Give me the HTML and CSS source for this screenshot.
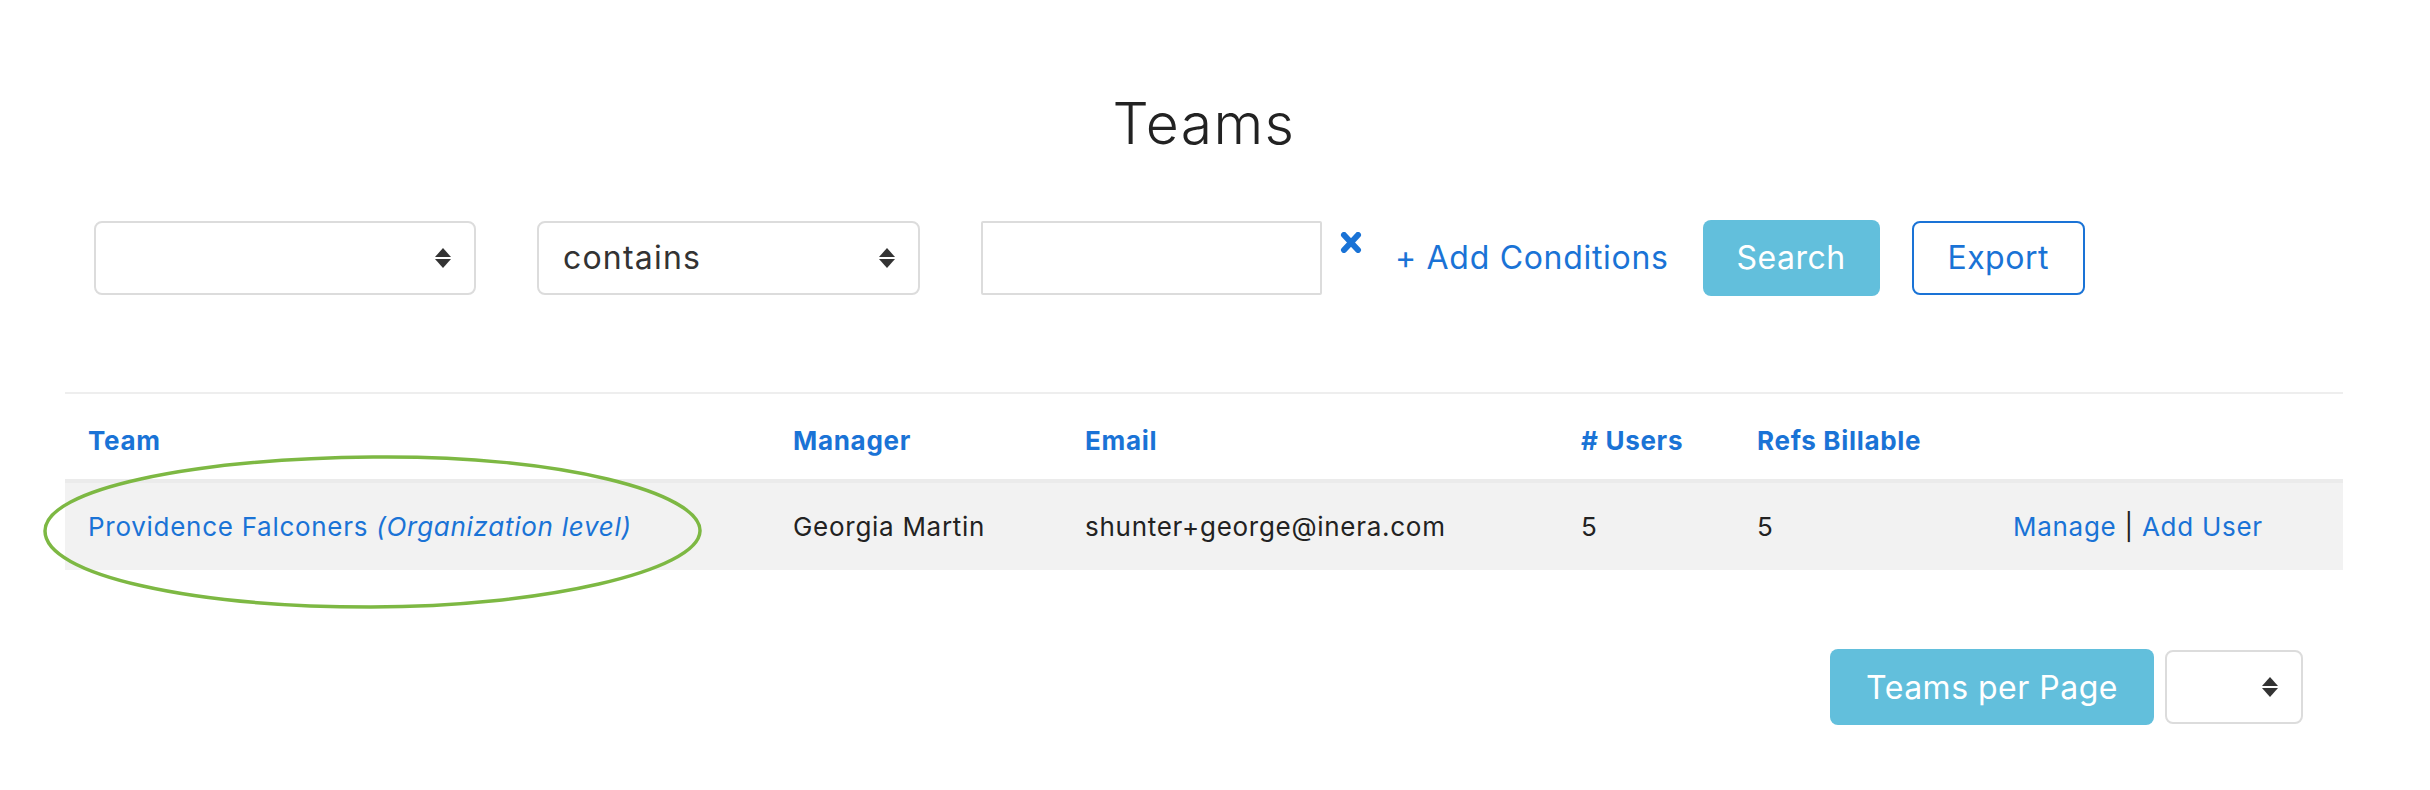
FILE: index.html
```html
<!DOCTYPE html>
<html lang="en">
<head>
<meta charset="utf-8">
<title>Teams</title>
<link rel="stylesheet" href="styles.css">
</head>
<body>
<div class="page">
  <h1 class="title">Teams</h1>

  <div class="filters">
    <div class="select select-field">
      <span class="select-value"></span>
      <span class="updown"><i class="up"></i><i class="down"></i></span>
    </div>
    <div class="select select-op">
      <span class="select-value">contains</span>
      <span class="updown"><i class="up"></i><i class="down"></i></span>
    </div>
    <div class="text-input"></div>
    <svg class="clear" viewBox="0 0 22 21" width="22" height="21" aria-hidden="true">
      <path d="M4 3 L18 18 M18 3 L4 18" stroke="#1a73d6" stroke-width="6" stroke-linecap="round" fill="none"/>
    </svg>
    <a class="add-link" href="#">+ Add Conditions</a>
    <button class="btn btn-search">Search</button>
    <button class="btn btn-export">Export</button>
  </div>

  <div class="table-wrap">
    <table class="teams">
      <colgroup>
        <col class="c-team"><col class="c-manager"><col class="c-email"><col class="c-users"><col class="c-refs"><col class="c-actions">
      </colgroup>
      <thead>
        <tr>
          <th>Team</th>
          <th>Manager</th>
          <th>Email</th>
          <th># Users</th>
          <th>Refs Billable</th>
          <th></th>
        </tr>
      </thead>
      <tbody>
        <tr>
          <td><a href="#" class="link">Providence Falconers <em>(Organization level)</em></a></td>
          <td>Georgia Martin</td>
          <td>shunter+george@inera.com</td>
          <td>5</td>
          <td>5</td>
          <td><a href="#" class="link">Manage</a> | <a href="#" class="link">Add User</a></td>
        </tr>
      </tbody>
    </table>
    <svg class="annotation" viewBox="0 0 664 158" width="664" height="158" aria-hidden="true">
      <path d="M332 4 C 520 2, 660 40, 659 78 C 658 118, 500 154, 330 154 C 150 154, 4 122, 4 78 C 4 36, 150 6, 332 4 Z" fill="none" stroke="#7db843" stroke-width="3.5"/>
    </svg>
  </div>

  <div class="pager">
    <button class="btn btn-per-page">Teams per Page</button>
    <div class="select select-per-page">
      <span class="select-value"></span>
      <span class="updown"><i class="up"></i><i class="down"></i></span>
    </div>
  </div>
</div>
</body>
</html>
```

FILE: styles.css
```css
* { box-sizing: border-box; }

html, body {
  margin: 0;
  padding: 0;
  background: #ffffff;
}

body {
  font-family: Inter, "Noto Sans", "Liberation Sans", sans-serif;
  color: #222222;
}

.page {
  width: 2278px;
  margin-left: 65px;
  padding-top: 86px;
}

.title {
  margin: 0;
  text-align: center;
  font-weight: 300;
  font-size: 57px;
  line-height: 76px;
  letter-spacing: 1.4px;
  color: #222222;
}

/* ---------- filter bar ---------- */
.filters {
  display: flex;
  align-items: center;
  margin-top: 58px;
  padding-left: 29px;
  height: 75px;
}

.select {
  height: 74px;
  border: 2px solid #dcdcdc;
  border-radius: 8px;
  display: flex;
  align-items: center;
  justify-content: space-between;
  padding: 0 23px 0 24px;
  background: #fff;
}

.select-value {
  font-size: 32px;
  letter-spacing: 1.2px;
  color: #333333;
}

.select-field { width: 382px; }
.select-op { width: 383px; margin-left: 61px; }

.updown {
  display: flex;
  flex-direction: column;
  align-items: center;
  gap: 2px;
}

.updown i {
  display: block;
  width: 0;
  height: 0;
  border-left: 8px solid transparent;
  border-right: 8px solid transparent;
}
.updown .up { border-bottom: 9px solid #333; }
.updown .down { border-top: 9px solid #333; }

.text-input {
  width: 341px;
  height: 74px;
  margin-left: 61px;
  border: 2px solid #dcdcdc;
  border-radius: 2px;
  background: #fff;
}

.clear {
  align-self: flex-start;
  margin-top: 12px;
  margin-left: 18px;
}

.add-link {
  margin-left: 33px;
  font-size: 32px;
  letter-spacing: 0.7px;
  color: #1a73d6;
  text-decoration: none;
}

.btn {
  font-family: inherit;
  border-radius: 8px;
  cursor: pointer;
  font-size: 32px;
  letter-spacing: 0.5px;
  padding: 0;
}

.btn-search {
  margin-left: 34px;
  width: 177px;
  height: 76px;
  background: #62bfdc;
  border: none;
  color: #ffffff;
}

.btn-export {
  margin-left: 32px;
  width: 173px;
  height: 74px;
  background: #fff;
  border: 2px solid #1a73d6;
  color: #1a73d6;
}

/* ---------- table ---------- */
.table-wrap {
  position: relative;
  margin-top: 97px;
}

.teams {
  width: 100%;
  border-collapse: collapse;
  table-layout: fixed;
  border-top: 2px solid #eeeeee;
}

.c-team { width: 705px; }
.c-manager { width: 292px; }
.c-email { width: 496px; }
.c-users { width: 176px; }
.c-refs { width: 256px; }
.c-actions { width: 353px; }

.teams th {
  text-align: left;
  font-weight: 700;
  font-size: 26px;
  color: #1a73d6;
  height: 88px;
  padding: 8px 0 0 23px;
  letter-spacing: 0.7px;
}

.teams tbody tr {
  background: #f2f2f2;
  border-top: 4px solid #ebebeb;
}

.teams td {
  height: 89px;
  padding: 0 0 0 23px;
  font-size: 26px;
  letter-spacing: 0.72px;
  color: #222222;
  white-space: nowrap;
}

.link {
  color: #1a73d6;
  text-decoration: none;
}

.link em { font-style: italic; }

.annotation {
  position: absolute;
  left: -24px;
  top: 61px;
}

/* ---------- pager ---------- */
.pager {
  display: flex;
  justify-content: flex-end;
  align-items: center;
  gap: 11px;
  margin-top: 79px;
  padding-right: 40px;
}

.btn-per-page {
  width: 324px;
  height: 76px;
  background: #62bfdc;
  border: none;
  color: #ffffff;
  font-size: 32px;
}

.select-per-page {
  width: 138px;
  height: 74px;
  justify-content: flex-end;
}
```
